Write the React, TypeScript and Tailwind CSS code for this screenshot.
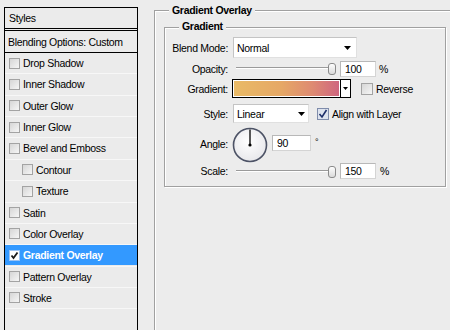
import React from "react";

const font = { fontFamily: '"Liberation Sans", Arial, sans-serif' };

function PanelCheck({ checked = false, selected = false }: { checked?: boolean; selected?: boolean }) {
  return (
    <div
      className={
        "w-[11px] h-[11px] shrink-0 border flex items-center justify-center " +
        (selected
          ? "bg-white border-[#9cc4f4]"
          : "border-[#a3a3a3] bg-gradient-to-br from-[#d6d6d6] to-[#f6f6f6]")
      }
    >
      {checked && (
        <svg width="9" height="9" viewBox="0 0 9 9">
          <path d="M1.5 4.5 L3.5 7 L7.5 1.5" stroke="#1a1a1a" strokeWidth="1.8" fill="none" />
        </svg>
      )}
    </div>
  );
}

const items: { label: string; indent?: boolean; selected?: boolean }[] = [
  { label: "Drop Shadow" },
  { label: "Inner Shadow" },
  { label: "Outer Glow" },
  { label: "Inner Glow" },
  { label: "Bevel and Emboss" },
  { label: "Contour", indent: true },
  { label: "Texture", indent: true },
  { label: "Satin" },
  { label: "Color Overlay" },
  { label: "Gradient Overlay", selected: true },
  { label: "Pattern Overlay" },
  { label: "Stroke" },
];

function Arrow() {
  return (
    <svg width="7" height="4" viewBox="0 0 7 4">
      <path d="M0 0 H7 L3.5 4 Z" fill="#000" />
    </svg>
  );
}

function Slider() {
  return (
    <div className="relative w-[104px] h-[17px]">
      <div className="absolute left-[3px] top-[7px] w-[93px] h-[2px] border-t border-[#9a9a9a] border-b border-b-white" />
      <svg className="absolute left-[95px] top-[3px]" width="9" height="13" viewBox="0 0 9 13">
        <defs>
          <linearGradient id="tg" x1="0" y1="0" x2="0" y2="1">
            <stop offset="0" stopColor="#ffffff" />
            <stop offset="1" stopColor="#d8d8d8" />
          </linearGradient>
        </defs>
        <rect x="0.5" y="0.5" width="7" height="11" rx="2.5" fill="url(#tg)" stroke="#8a8a8a" />
      </svg>
    </div>
  );
}

function TextBox({ value, w }: { value: string; w: string }) {
  return (
    <div
      className={
        "h-[16px] bg-white border border-[#d4d4d4] border-t-[#b8b8b8] border-l-[#b8b8b8] flex items-center pl-[4px] " + w
      }
    >
      {value}
    </div>
  );
}

export default function App() {
  return (
    <div
      className="w-[450px] h-[330px] overflow-hidden bg-[#ececec] flex text-[10.5px] tracking-[-0.3px] text-black leading-[12px]"
      style={font}
    >
      {/* Left styles panel */}
      <div className="ml-[4px] mt-[7px] w-[134px] h-[340px] shrink-0 border-x border-t border-black flex flex-col bg-[#ebebeb]">
        <div className="h-[21px] border-b border-black flex items-center pl-[4px]">Styles</div>
        <div className="h-[2px] border-b border-black" />
        <div className="h-[22px] border-b border-black flex items-center pl-[3px]">Blending Options: Custom</div>
        {items.map((it) => (
          <div
            key={it.label}
            className="h-[21.36px] shrink-0 border-b border-[#f7f7f7] flex flex-col"
          >
            <div
              className={
                "h-[20px] flex items-center gap-[3px] " +
                (it.indent ? "pl-[17px] " : "pl-[4px] ") +
                (it.selected ? "bg-[#3399ff] text-white font-bold" : "")
              }
            >
              <PanelCheck checked={it.selected} selected={it.selected} />
              <span>{it.label}</span>
            </div>
          </div>
        ))}
      </div>

      {/* Right side */}
      <div className="pl-[16px] pt-[10px] shrink-0">
        <div className="relative w-[320px] h-[340px] border-l border-t border-[#a0a0a0] shadow-[inset_1px_1px_0_#ffffff]">
          <div className="absolute left-[14px] top-[-7px] px-[3px] bg-[#ececec] font-bold">Gradient Overlay</div>

          <div className="relative ml-[9px] mt-[16px] w-[282px] h-[160px] border border-[#a0a0a0] shadow-[inset_1px_1px_0_#ffffff,1px_1px_0_#ffffff]">
            <div className="absolute left-[14px] top-[-8px] px-[3px] bg-[#ececec] font-bold">Gradient</div>

            <div className="flex flex-col pt-[9px]">
              {/* Blend Mode */}
              <div className="h-[21px] flex items-center">
                <div className="w-[63px] text-right">Blend Mode:</div>
                <div className="ml-[5px] w-[124px] h-[21px] bg-white border border-[#e0e0e0] border-t-[#c4c4c4] border-l-[#c4c4c4] flex items-center justify-between pl-[3px] pr-[5px]">
                  <span>Normal</span>
                  <Arrow />
                </div>
              </div>

              {/* Opacity */}
              <div className="mt-[2px] h-[17px] flex items-center">
                <div className="w-[63px] text-right">Opacity:</div>
                <div className="ml-[5px]">
                  <Slider />
                </div>
                <div className="ml-[3px]">
                  <TextBox value="100" w="w-[36px]" />
                </div>
                <span className="ml-[3px]">%</span>
              </div>

              {/* Gradient */}
              <div className="mt-[2px] h-[19px] flex items-center">
                <div className="w-[63px] text-right">Gradient:</div>
                <div className="ml-[4px] w-[119px] h-[19px] border border-black flex">
                  <div className="flex-1 border border-white bg-[linear-gradient(to_right,#e9ba66_0%,#e6a866_45%,#de8a72_75%,#cf667f_100%)]" />
                  <div className="w-[10px] border-l border-black bg-white flex items-center justify-center">
                    <svg width="5" height="3" viewBox="0 0 5 3">
                      <path d="M0 0 H5 L2.5 3 Z" fill="#000" />
                    </svg>
                  </div>
                </div>
                <div className="ml-[10px] w-[12px] h-[12px] border border-[#a3a3a3] bg-gradient-to-br from-[#d6d6d6] to-[#f6f6f6]" />
                <span className="ml-[3px]">Reverse</span>
              </div>

              {/* Style */}
              <div className="mt-[6px] h-[19px] flex items-center">
                <div className="w-[63px] text-right">Style:</div>
                <div className="ml-[5px] w-[76px] h-[19px] bg-white border border-[#e0e0e0] border-t-[#c4c4c4] border-l-[#c4c4c4] flex items-center justify-between pl-[3px] pr-[3px]">
                  <span>Linear</span>
                  <Arrow />
                </div>
                <div className="ml-[8px] w-[12px] h-[12px] border border-[#7f8cab] bg-[#dde3ee] flex items-center justify-center">
                  <svg width="10" height="10" viewBox="0 0 10 10">
                    <path d="M1.5 5 L4 8 L8.5 1" stroke="#1d2f6a" strokeWidth="1.6" fill="none" />
                  </svg>
                </div>
                <span className="ml-[3px]">Align with Layer</span>
              </div>

              {/* Angle */}
              <div className="mt-[4px] h-[35px] flex items-start">
                <div className="w-[63px] text-right mt-[11px]">Angle:</div>
                <svg className="ml-[4px]" width="36" height="36" viewBox="0 0 36 36">
                  <defs>
                    <radialGradient id="dg" cx="0.45" cy="0.4" r="0.7">
                      <stop offset="0" stopColor="#ffffff" />
                      <stop offset="1" stopColor="#e4e4e8" />
                    </radialGradient>
                  </defs>
                  <circle cx="18" cy="18" r="16.5" fill="url(#dg)" stroke="#4d5366" strokeWidth="1.6" />
                  <line x1="18" y1="18" x2="18" y2="2.5" stroke="#000" strokeWidth="1.3" />
                  <circle cx="18" cy="18" r="1.6" fill="#000" />
                </svg>
                <div className="ml-[4px] mt-[8px]">
                  <TextBox value="90" w="w-[39px]" />
                </div>
                <span className="ml-[4px] mt-[9px] text-[9px]">°</span>
              </div>

              {/* Scale */}
              <div className="mt-[1px] h-[16px] flex items-center">
                <div className="w-[63px] text-right">Scale:</div>
                <div className="ml-[5px]">
                  <Slider />
                </div>
                <div className="ml-[3px]">
                  <TextBox value="150" w="w-[36px]" />
                </div>
                <span className="ml-[4px]">%</span>
              </div>
            </div>
          </div>
        </div>
      </div>
    </div>
  );
}
